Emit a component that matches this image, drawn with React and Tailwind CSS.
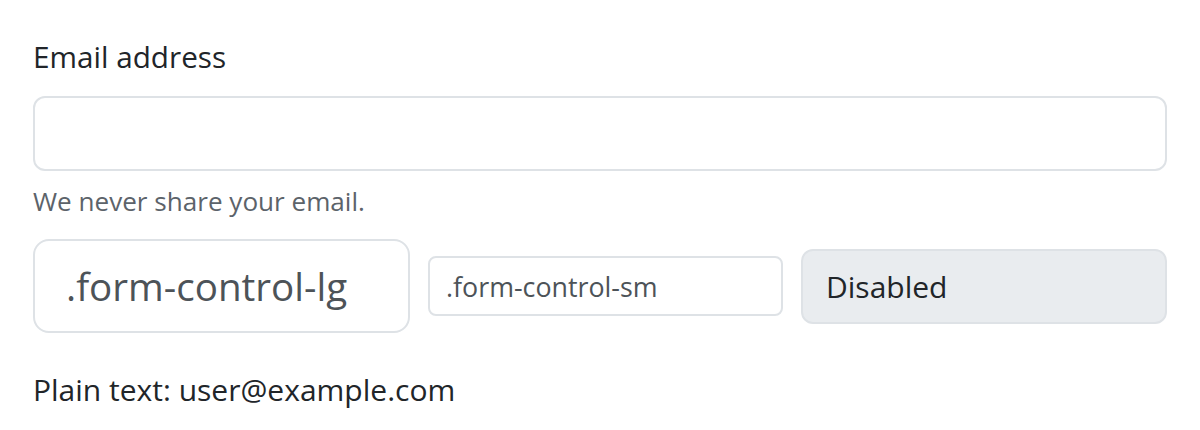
export default function App() {
  return (
    <div className="min-h-[430px] bg-white px-[33px] pt-[33px] font-['Open_Sans',sans-serif]">
      <label className="block text-[29.7px] leading-[47px] mb-[16px] text-[#212529]">Email address</label>
      <input
        type="email"
        className="block w-full h-[75px] border-2 border-[#dee2e6] rounded-[12px] bg-white px-[23px] text-[30px] text-[#212529] outline-none"
      />
      <div className="mt-[10px] text-[26.1px] leading-[41px] text-[#5c636a]">We never share your email.</div>
      <div className="mt-[17px] flex items-center gap-[18px]">
        <input
          readOnly
          value=".form-control-lg"
          className="w-[377px] h-[94px] border-2 border-[#dee2e6] rounded-[16px] bg-white pl-[31px] pr-[16px] text-[38.6px] text-[#4d5358] outline-none"
        />
        <input
          readOnly
          value=".form-control-sm"
          className="w-[355px] h-[60px] border-2 border-[#dee2e6] rounded-[8px] bg-white pl-[16px] pr-[8px] text-[26.8px] text-[#4d5358] outline-none"
        />
        <input
          disabled
          value="Disabled"
          className="w-[366px] h-[75px] border-2 border-[#dee2e6] rounded-[12px] bg-[#e9ecef] pl-[23px] pr-[12px] text-[30px] text-[#212529] outline-none"
        />
      </div>
      <div className="mt-[33px] text-[30px] leading-[47px] text-[#212529]">Plain text: user@example.com</div>
    </div>
  );
}
